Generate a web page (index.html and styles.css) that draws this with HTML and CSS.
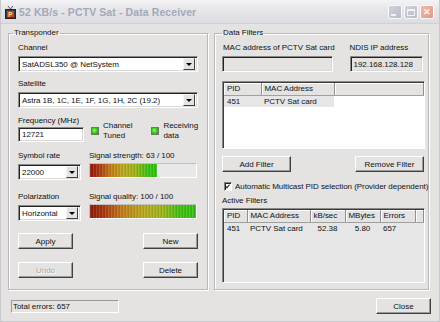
FILE: index.html
```html
<!DOCTYPE html>
<html lang="en">
<head>
  <meta charset="UTF-8">
  <title>PCTV Sat - Data Receiver</title>
  <link rel="stylesheet" href="styles.css">
</head>
<body>
  <div class="window">
    <div class="titlebar">
      <svg class="app-icon" width="11" height="13" viewBox="0 0 11 13">
        <path d="M3 0 L5.5 3 L8 0" fill="none" stroke="#555" stroke-width="1"/>
        <rect x="0.5" y="3.5" width="10" height="9" fill="#3a3a4a" stroke="#222"/>
        <rect x="2" y="5" width="7" height="6" fill="#d83a1a"/>
        <text x="3.2" y="10.5" font-family="Liberation Sans, sans-serif" font-weight="bold" font-size="6.5" fill="#f4e070">P</text>
      </svg>
      <span class="title">52 KB/s - PCTV Sat - Data Receiver</span>
      <div class="caption-btns">
        <div class="cap-btn cap-min"><span class="glyph-min"></span></div>
        <div class="cap-btn cap-max"><span class="glyph-max"></span></div>
        <div class="cap-btn cap-close">&#x2715;</div>
      </div>
    </div>

    <div class="client">
      <div class="groups">
        <!-- Transponder -->
        <fieldset class="group group-left">
          <legend>Transponder</legend>

          <div class="label first">Channel</div>
          <div class="combo wide"><span class="combo-text">SatADSL350 @ NetSystem</span><span class="combo-btn"></span></div>

          <div class="label sat">Satellite</div>
          <div class="combo wide"><span class="combo-text">Astra 1B, 1C, 1E, 1F, 1G, 1H, 2C (19.2)</span><span class="combo-btn"></span></div>

          <div class="row freq-row">
            <div class="col-left">
              <div class="label">Frequency (MHz)</div>
              <div class="edit freq">12721</div>
            </div>
            <div class="leds">
              <div class="led-item"><span class="led"></span><span class="led-text">Channel<br>Tuned</span></div>
              <div class="led-item"><span class="led"></span><span class="led-text">Receiving<br>data</span></div>
            </div>
          </div>

          <div class="row sym-row">
            <div class="col-left">
              <div class="label">Symbol rate</div>
              <div class="combo small"><span class="combo-text">22000</span><span class="combo-btn"></span></div>
            </div>
            <div class="col-right">
              <div class="label">Signal strength: 63 / 100</div>
              <div class="meter"><div class="meter-fill" style="width: 63%"></div></div>
            </div>
          </div>

          <div class="row pol-row">
            <div class="col-left">
              <div class="label">Polarization</div>
              <div class="combo small"><span class="combo-text">Horizontal</span><span class="combo-btn"></span></div>
            </div>
            <div class="col-right">
              <div class="label">Signal quality: 100 / 100</div>
              <div class="meter"><div class="meter-fill" style="width: 100%"></div></div>
            </div>
          </div>

          <div class="btn-row">
            <button class="btn">Apply</button>
            <button class="btn">New</button>
          </div>
          <div class="btn-row">
            <button class="btn" disabled>Undo</button>
            <button class="btn">Delete</button>
          </div>
        </fieldset>

        <!-- Data Filters -->
        <fieldset class="group group-right">
          <legend>Data Filters</legend>

          <div class="addr-row">
            <div class="addr-mac">
              <div class="label first">MAC address of PCTV Sat card</div>
              <div class="edit readonly mac"></div>
            </div>
            <div class="addr-ip">
              <div class="label first">NDIS IP address</div>
              <div class="edit readonly ip">192.168.128.128</div>
            </div>
          </div>

          <div class="listview filters">
            <table>
              <colgroup><col class="c-pid"><col class="c-mac"><col></colgroup>
              <thead><tr><th>PID</th><th>MAC Address</th><th></th></tr></thead>
              <tbody>
                <tr class="selected"><td>451</td><td>PCTV Sat card</td><td class="unsel"></td></tr>
              </tbody>
            </table>
          </div>

          <div class="btn-row filter-btns">
            <button class="btn wide-btn">Add Filter</button>
            <button class="btn wide-btn">Remove Filter</button>
          </div>

          <div class="check-row">
            <span class="checkbox">&#x2714;</span>
            <span>Automatic Multicast PID selection (Provider dependent)</span>
          </div>

          <div class="label active-label">Active Filters</div>
          <div class="listview active">
            <table>
              <colgroup><col class="a-pid"><col class="a-mac"><col class="a-kb"><col class="a-mb"><col class="a-err"><col></colgroup>
              <thead><tr><th>PID</th><th>MAC Address</th><th>kB/sec</th><th>MBytes</th><th>Errors</th><th></th></tr></thead>
              <tbody>
                <tr><td>451</td><td>PCTV Sat card</td><td class="num">52.38</td><td class="num">5.80</td><td>657</td><td></td></tr>
              </tbody>
            </table>
          </div>
        </fieldset>
      </div>

      <div class="footer">
        <div class="status">Total errors: 657</div>
        <button class="btn close-btn">Close</button>
      </div>
    </div>
  </div>
</body>
</html>
```

FILE: styles.css
```css
:root {
  --face: #e4e3e1;
  --shadow: #8a8a8a;
  --dark: #3c3c3c;
  --light: #ffffff;
  --text: #111111;
}

* {
  margin: 0;
  padding: 0;
  box-sizing: border-box;
}

body {
  width: 440px;
  height: 322px;
  overflow: hidden;
  font-family: "Liberation Sans", Arial, sans-serif;
  font-size: 8px;
  letter-spacing: -0.05px;
  color: var(--text);
  background: var(--face);
}

.window {
  width: 440px;
  height: 322px;
  background: var(--face);
  border: 1px solid #c8c8cc;
  border-top: none;
  display: flex;
  flex-direction: column;
}

/* Title bar (inactive) */
.titlebar {
  height: 24px;
  display: flex;
  align-items: center;
  padding: 0 5px 0 4px;
  background: linear-gradient(#f4f4f6, #e6e6ea 40%, #dcdce2);
  border-bottom: 1px solid #d0d0d6;
}

.app-icon {
  margin-right: 3px;
  margin-top: 1px;
}

.title {
  font-size: 10.5px;
  font-weight: bold;
  letter-spacing: 0.1px;
  color: #a3a9b8;
  flex: 1;
}

.caption-btns {
  display: flex;
  gap: 2px;
  margin-top: 1px;
}

.cap-btn {
  width: 14px;
  height: 14px;
  border: 1px solid #fafafc;
  border-radius: 2px;
  background: linear-gradient(135deg, #d0d2dc, #b8bccb);
  display: flex;
  align-items: center;
  justify-content: center;
}

.glyph-min {
  width: 5px;
  height: 2px;
  background: #f2f2f4;
  margin: 6px 4px 0 0;
}

.glyph-max {
  width: 8px;
  height: 7px;
  border: 1px solid #f2f2f4;
  border-top-width: 2px;
}

.cap-close {
  background: linear-gradient(135deg, #f0b8a8, #e09a88);
  color: #fff6f2;
  font-size: 9px;
  font-weight: bold;
}

/* Client area */
.client {
  flex: 1;
  padding: 4px 9px 0 7px;
  display: flex;
  flex-direction: column;
}

.groups {
  display: flex;
  gap: 6px;
  height: 262px;
}

.group {
  border: 1px solid #b8b8b8;
  box-shadow: inset 1px 1px 0 #fff, 1px 1px 0 #fff;
  height: 100%;
  min-width: 0;
  flex: none;
}

.group legend {
  padding: 0 1px;
  line-height: 10px;
}

.group-left {
  width: 200px;
  padding: 0 9px;
}

.group-left legend {
  margin-left: -5px;
}

.group-right {
  width: 215px;
  padding: 0 3px 0 7px;
}

.group-right legend {
  margin-left: 0;
}

.label {
  line-height: 10px;
  white-space: nowrap;
}

.label.first {
  margin-top: 5px;
}

.label.sat {
  margin-top: 7px;
}

/* Combo boxes and edits */
.combo,
.edit {
  height: 16px;
  border: 1px solid;
  border-color: var(--shadow) var(--light) var(--light) var(--shadow);
  box-shadow: inset 1px 1px 0 #222, inset -1px -1px 0 #d8d8d8;
  background: #fff;
  display: flex;
  align-items: center;
  padding-left: 3px;
  white-space: nowrap;
  overflow: hidden;
}

.combo {
  margin-top: 3px;
  padding-right: 2px;
}

.combo-text {
  flex: 1;
}

.combo-btn {
  width: 12px;
  height: 12px;
  background: var(--face);
  border: 1px solid;
  border-color: #f4f4f4 #404040 #404040 #f4f4f4;
  display: flex;
  align-items: center;
  justify-content: center;
}

.combo-btn::after {
  content: "";
  border-left: 3px solid transparent;
  border-right: 3px solid transparent;
  border-top: 3px solid #000;
  margin-top: 1px;
}

.combo.wide {
  width: 180px;
}

.combo.small {
  width: 63px;
}

.edit.freq {
  width: 66px;
  height: 15px;
  margin-top: 1px;
}

.edit.readonly {
  background: var(--face);
  margin-top: 3px;
}

.edit.mac {
  width: 111px;
}

.edit.ip {
  width: 73px;
}

/* Rows in the transponder group */
.row {
  display: flex;
}

.col-left {
  width: 71px;
}

.col-right {
  flex: 1;
}

.freq-row {
  margin-top: 8px;
}

.sym-row {
  margin-top: 9px;
}

.pol-row {
  margin-top: 12px;
}

.leds {
  display: flex;
  align-items: center;
  padding-left: 7px;
  gap: 19px;
  margin-top: 4px;
}

.led-item {
  display: flex;
  align-items: center;
  gap: 4px;
}

.led {
  width: 8px;
  height: 8px;
  background: radial-gradient(circle at 40% 40%, #8cff5a, #32c014 60%, #1e8a0a);
  border: 1px solid #6a7a66;
}

.led-text {
  line-height: 10px;
}

.meter {
  width: 108px;
  height: 15px;
  margin-top: 2px;
  background: #e8e8e8;
  border: 1px solid;
  border-color: #c0c0c0 #fff #fff #c0c0c0;
}

.meter-fill {
  height: 100%;
  background:
    repeating-linear-gradient(90deg, rgba(255,255,255,0.12) 0 1px, rgba(0,0,0,0) 1px 2px, rgba(0,0,0,0.08) 2px 3px),
    linear-gradient(90deg, #8a1a08 0%, #a83210 12%, #c07a18 30%, #b8a820 50%, #9cb418 68%, #3cc010 86%, #30c010 100%);
}

/* Buttons */
.btn {
  font-family: inherit;
  font-size: 8px;
  color: var(--text);
  width: 55px;
  height: 16px;
  background: var(--face);
  border: 1px solid;
  border-color: #fff #404040 #404040 #fff;
  box-shadow: inset -1px -1px 0 #9a9a9a;
}

.btn:disabled {
  color: #a8a8a8;
  text-shadow: 1px 1px 0 #fff;
}

.btn-row {
  display: flex;
  justify-content: space-between;
  margin-top: 12px;
}

.btn-row + .btn-row {
  margin-top: 13px;
}

/* Data filters */
.addr-row {
  display: flex;
  gap: 15px;
}

.addr-mac .label {
  padding-left: 1px;
}

.listview {
  width: 203px;
  border: 1px solid;
  border-color: var(--shadow) #fff #fff var(--shadow);
  box-shadow: inset 1px 1px 0 #3a3a3a;
  background: #fff;
  padding: 1px 0 0 1px;
  overflow: hidden;
}

.listview table {
  width: 100%;
  border-collapse: collapse;
  table-layout: fixed;
}

.listview th {
  font-weight: normal;
  text-align: left;
  height: 12px;
  padding: 0 3px;
  background: var(--face);
  border-right: 1px solid #909090;
  border-bottom: 1px solid #a0a0a0;
  box-shadow: inset 1px 1px 0 #fff;
  white-space: nowrap;
}

.listview td {
  height: 12px;
  padding: 0 3px;
  white-space: nowrap;
}

.filters {
  height: 68px;
  margin-top: 9px;
}

.c-pid {
  width: 37px;
}

.c-mac {
  width: 73px;
}

.filters tr.selected td {
  background: #e6e6e6;
}

.filters tr.selected td.unsel {
  background: #fff;
}

.filter-btns {
  margin-top: 7px;
  padding-right: 1px;
}

.wide-btn {
  width: 69px;
}

.check-row {
  display: flex;
  align-items: center;
  gap: 3px;
  margin-top: 10px;
  padding-left: 2px;
  white-space: nowrap;
}

.checkbox {
  width: 9px;
  height: 9px;
  background: #fff;
  border: 1px solid;
  border-color: #808080 #fff #fff #808080;
  box-shadow: inset 1px 1px 0 #222;
  font-size: 7px;
  line-height: 7px;
  text-align: center;
}

.active-label {
  margin-top: 5px;
}

.active {
  height: 75px;
  margin-top: 2px;
  background: #e6e6e6;
}

.a-pid {
  width: 23px;
}

.a-mac {
  width: 63px;
}

.a-kb,
.a-mb,
.a-err {
  width: 35px;
}

.active td.num {
  text-align: center;
}

/* Footer */
.footer {
  display: flex;
  justify-content: space-between;
  align-items: flex-end;
  margin-top: 8px;
  padding-left: 3px;
}

.status {
  width: 108px;
  height: 13px;
  line-height: 11px;
  padding-left: 1px;
  border: 1px solid;
  border-color: #9a9a9a #fff #fff #9a9a9a;
  margin-bottom: 1px;
}

.close-btn {
  margin-right: -1px;
}
```
